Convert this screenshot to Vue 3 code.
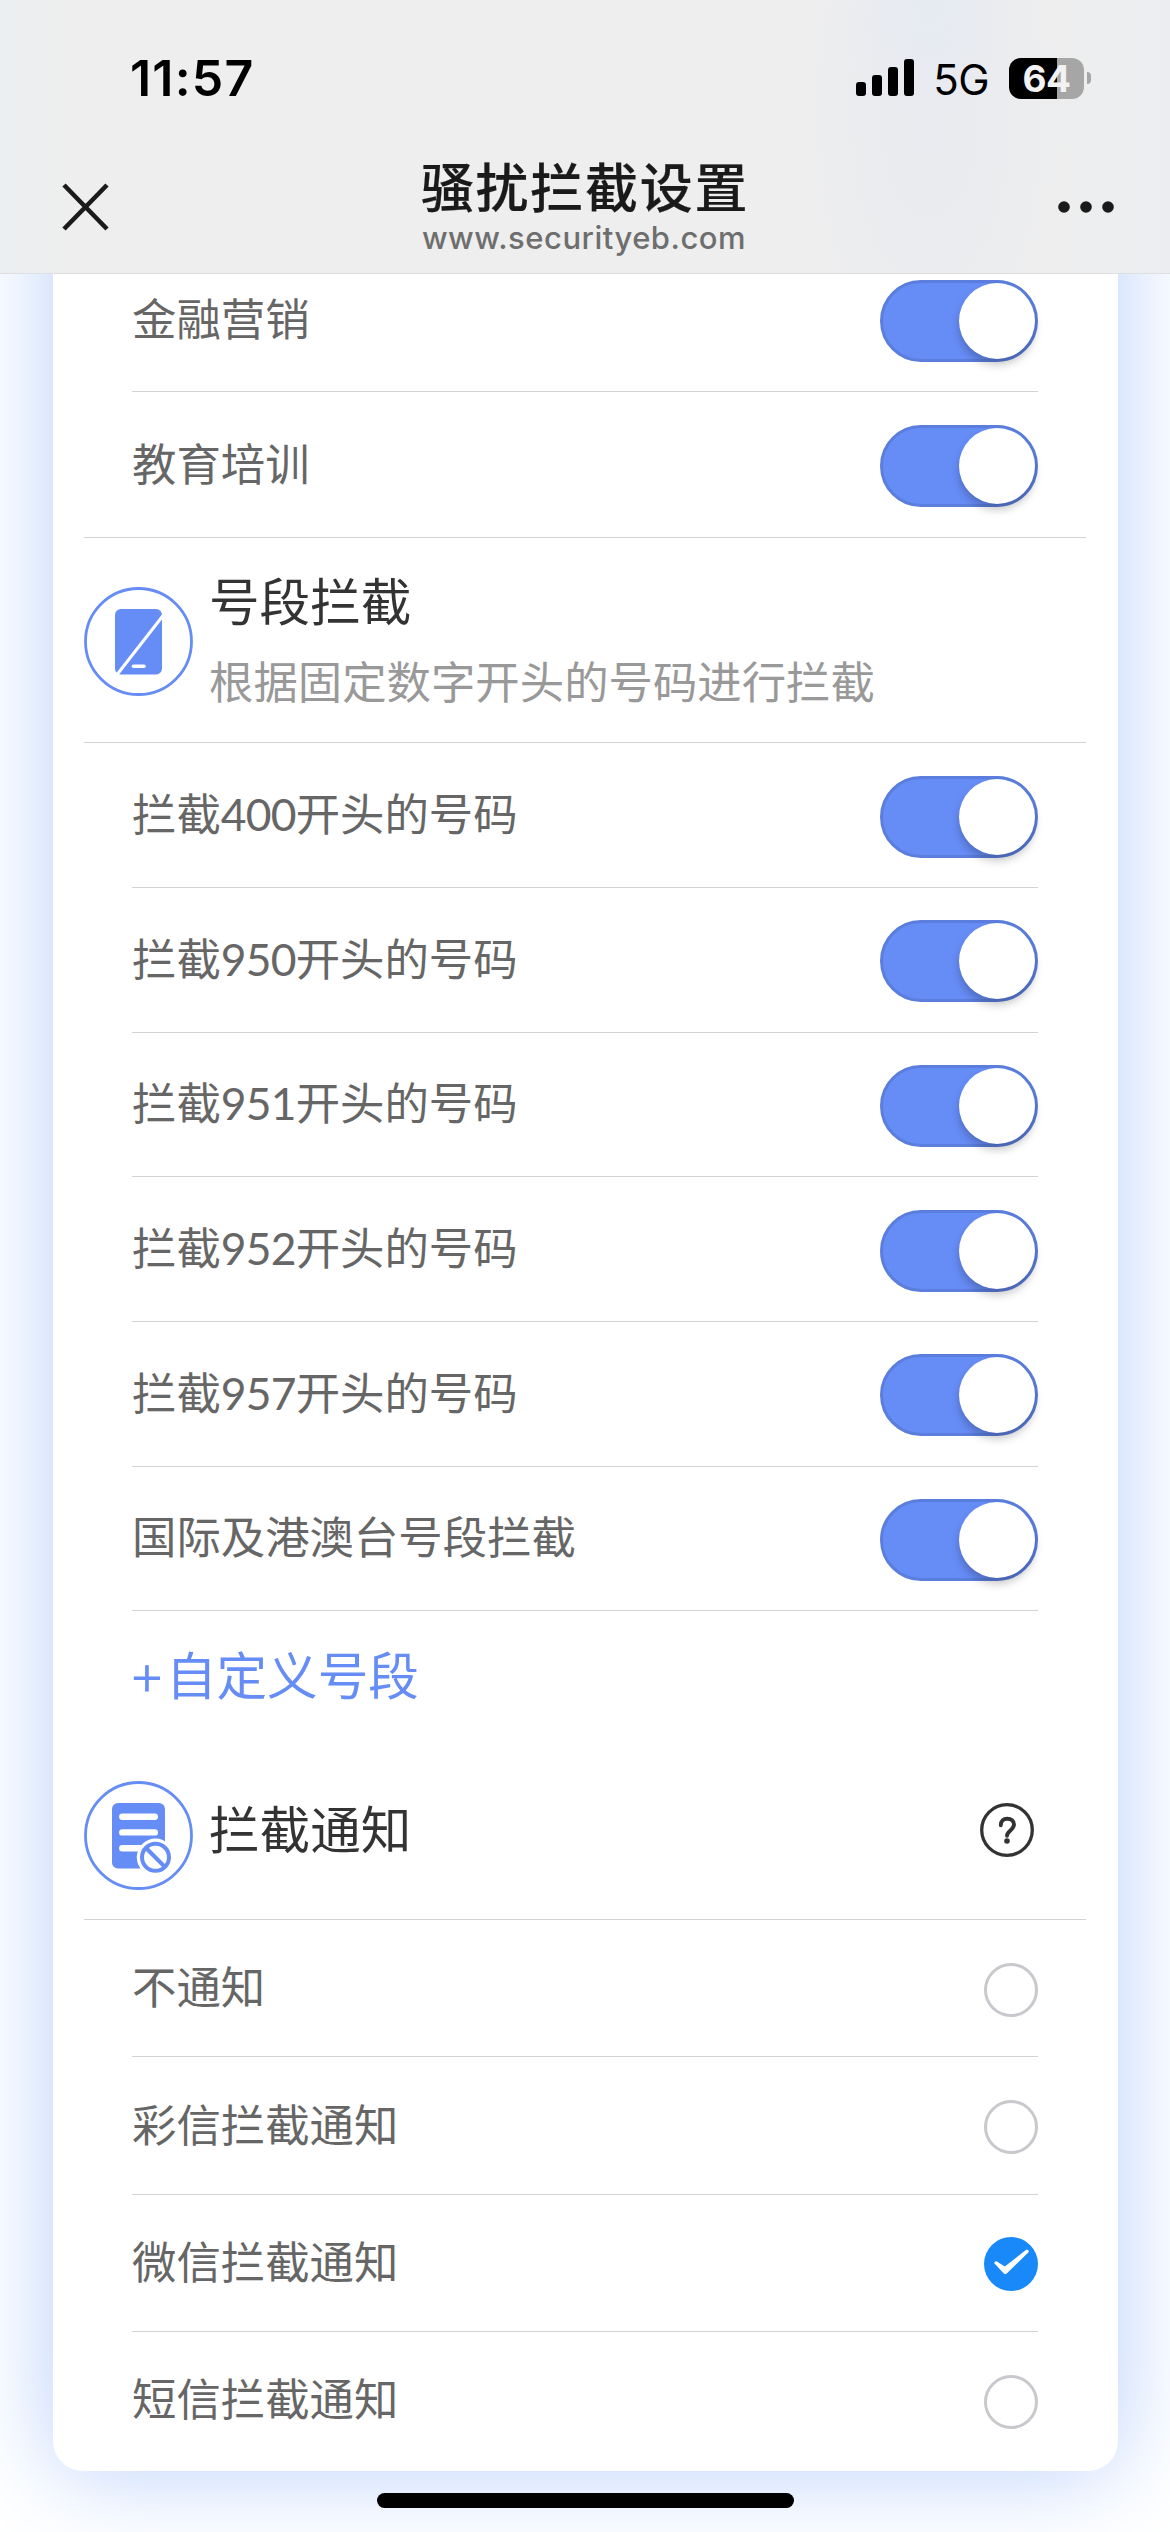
<script setup>
import { ref } from 'vue'

const categories = ref([
  { label: '金融营销', on: true },
  { label: '教育培训', on: true },
])
const segments = ref([
  { prefix: '拦截', digits: '400', suffix: '开头的号码', on: true },
  { prefix: '拦截', digits: '950', suffix: '开头的号码', on: true },
  { prefix: '拦截', digits: '951', suffix: '开头的号码', on: true },
  { prefix: '拦截', digits: '952', suffix: '开头的号码', on: true },
  { prefix: '拦截', digits: '957', suffix: '开头的号码', on: true },
  { prefix: '国际及港澳台号段拦截', digits: '', suffix: '', on: true },
])
const notices = ['不通知', '彩信拦截通知', '微信拦截通知', '短信拦截通知']
const notice = ref('微信拦截通知')
</script>

<template>
  <div class="screen">
    <header class="top">
      <div class="status">
        <span class="time">11:57</span>
        <div class="indicators">
          <svg class="signal" width="58" height="38" viewBox="0 0 58 38">
            <rect x="0" y="23" width="10" height="14" rx="3" />
            <rect x="16" y="16" width="10" height="21" rx="3" />
            <rect x="32" y="8" width="10" height="29" rx="3" />
            <rect x="48" y="0" width="10" height="37" rx="3" />
          </svg>
          <span class="network">5G</span>
          <div class="battery"><span>64</span></div>
          <i class="nub"></i>
        </div>
      </div>
      <nav class="nav">
        <svg class="close" width="47" height="48" viewBox="0 0 47 48">
          <path d="M2 2 45 46M45 2 2 46" fill="none" stroke="#1a1a1a" stroke-width="4.6" />
        </svg>
        <div class="heading">
          <h1>骚扰拦截设置</h1>
          <p>www.securityeb.com</p>
        </div>
        <svg class="more" width="56" height="12" viewBox="0 0 56 12" fill="#1a1a1a">
          <circle cx="6" cy="6" r="5.8" /><circle cx="28" cy="6" r="5.8" /><circle cx="50" cy="6" r="5.8" />
        </svg>
      </nav>
    </header>

    <main class="card">
      <ul class="rows">
        <li v-for="item in categories" :key="item.label" class="row">
          <span class="label">{{ item.label }}</span>
          <button class="toggle" :class="{ on: item.on }" @click="item.on = !item.on"><i></i></button>
        </li>
      </ul>

      <section class="section segment">
        <svg class="badge" width="109" height="109" viewBox="0 0 109 109">
          <circle cx="54.5" cy="54.5" r="53" fill="none" stroke="#668cf6" stroke-width="2.8" />
          <rect x="31" y="22" width="47" height="65.5" rx="6" fill="#668cf6" />
          <path d="M79.5 28 33.5 87" stroke="#fff" stroke-width="3" />
          <path d="M49.5 79.3H60" stroke="#fff" stroke-width="3.6" stroke-linecap="round" />
        </svg>
        <div class="titles">
          <h2>号段拦截</h2>
          <p>根据固定数字开头的号码进行拦截</p>
        </div>
      </section>

      <ul class="rows">
        <li v-for="item in segments" :key="item.prefix + item.digits" class="row">
          <span class="label">{{ item.prefix }}<span class="digits">{{ item.digits }}</span>{{ item.suffix }}</span>
          <button class="toggle" :class="{ on: item.on }" @click="item.on = !item.on"><i></i></button>
        </li>
      </ul>

      <a class="add"><span class="plus">+</span>自定义号段</a>

      <section class="section notify">
        <svg class="badge" width="109" height="109" viewBox="0 0 109 109">
          <circle cx="54.5" cy="54.5" r="53" fill="none" stroke="#668cf6" stroke-width="2.8" />
          <rect x="28" y="22" width="53" height="65.5" rx="6" fill="#668cf6" />
          <path d="M38.3 35.8H70.8M38.3 51.4H70.8M38.3 67.2H70.8" stroke="#fff" stroke-width="6.4" stroke-linecap="round" />
          <circle cx="71.5" cy="76.3" r="18.7" fill="#fff" />
          <circle cx="71.5" cy="76.3" r="13.5" fill="none" stroke="#668cf6" stroke-width="4" />
          <path d="M62 67 81 86" stroke="#668cf6" stroke-width="4" />
        </svg>
        <h2>拦截通知</h2>
        <svg class="help" width="54" height="54" viewBox="0 0 54 54">
          <circle cx="27" cy="27" r="25.3" fill="none" stroke="#333" stroke-width="3.3" />
          <path d="M20.8 22.3C20.8 18.2 23.3 15.7 27.3 15.7 31.2 15.7 34 18.1 34 21.6 34 26.8 27 28 27 32.7" fill="none" stroke="#333" stroke-width="3.9" stroke-linecap="round" />
          <circle cx="27" cy="38" r="2.8" fill="#333" />
        </svg>
      </section>

      <ul class="rows options">
        <li v-for="name in notices" :key="name" class="row" @click="notice = name">
          <span class="label">{{ name }}</span>
          <svg v-if="notice === name" class="radio" width="54" height="54" viewBox="0 0 54 54">
            <circle cx="27" cy="27" r="27" fill="#1989fa" />
            <path d="M10.3 26.2C10.5 24.5 12 23.8 13.3 24.7L20.8 29.6 41.5 13.3C43.5 12 45.5 13.5 44.5 15.2L22.7 36.6C21.8 37.6 20.7 37.6 19.8 36.6Z" fill="#fff" />
          </svg>
          <svg v-else class="radio" width="54" height="54" viewBox="0 0 54 54">
            <circle cx="27" cy="27" r="25.5" fill="none" stroke="#c8c8cd" stroke-width="3" />
          </svg>
        </li>
      </ul>
    </main>
    <div class="home"></div>
  </div>
</template>

<style>
body {
  margin: 0;
  background: #fff;
}
</style>

<style scoped>
.screen {
  position: relative;
  box-sizing: border-box;
  width: 1170px;
  height: 2532px;
  overflow: hidden;
  background: #fff;
  font-family: Lato, "Noto Sans CJK SC", sans-serif;
}
h1,
h2,
p,
ul {
  margin: 0;
  padding: 0;
  font-weight: 400;
  list-style: none;
}

.top {
  position: relative;
  z-index: 2;
  box-sizing: border-box;
  height: 274px;
  border-bottom: 1px solid #dedfe1;
  background:
    radial-gradient(ellipse 90px 120px at 930px 0, rgba(225, 232, 245, 0.5), transparent),
    radial-gradient(ellipse 150px 340px at 930px 110px, rgba(229, 232, 240, 0.6), transparent),
    linear-gradient(90deg, #ebeef0, #eee 80px, #eee 1040px, #ebedf0);
}
.status {
  display: flex;
  justify-content: space-between;
  align-items: center;
  height: 156px;
  padding: 0 79px 0 130px;
}
.time {
  font: 600 50px/60px Inter, sans-serif;
  letter-spacing: 1.2px;
  color: #000;
}
.indicators {
  display: flex;
  align-items: center;
}
.network {
  margin: 3px 20px 0 19px;
  font: 400 42px/48px Inter, sans-serif;
  letter-spacing: -0.5px;
}
.battery {
  width: 75px;
  height: 41px;
  border-radius: 12px;
  background: linear-gradient(90deg, #000 64%, #a6a6a6 64%);
  color: #f2f2f3;
  text-align: center;
  font: 700 37px/41px Inter, sans-serif;
  letter-spacing: -0.5px;
}
.nub {
  width: 4px;
  height: 12px;
  margin-left: 3px;
  border-radius: 0 5px 5px 0;
  background: #a6a6a6;
}
.nav {
  display: flex;
  justify-content: space-between;
  align-items: center;
  height: 101px;
  padding: 0 56px 0 62px;
}
.heading {
  display: flex;
  flex-direction: column;
  align-items: center;
  margin-left: 1px;
  padding-bottom: 5px;
}
.heading h1 {
  margin: 0 -2px 3px 0;
  font: 500 53px/64px "Noto Sans CJK SC", sans-serif;
  letter-spacing: 1.7px;
  color: #1a1a1a;
  -webkit-text-stroke: 0.2px #1a1a1a;
}
.heading p {
  font: 500 31px/36px Inter, sans-serif;
  letter-spacing: 0.5px;
  color: #6e6e6e;
}

.card {
  box-sizing: border-box;
  width: 1065px;
  height: 2347px;
  margin: -150px 0 0 53px;
  padding: 123.7px 32px 0 31px;
  border-radius: 30px;
  background: #fff;
  box-shadow: 0 0 100px #b7cffb;
}
.rows {
  padding: 0 48px;
}
.row {
  display: flex;
  justify-content: space-between;
  align-items: center;
  box-sizing: border-box;
  height: 144.67px;
  border-bottom: 1px solid #d2d2d4;
}
.rows:first-child .row:last-child {
  border-bottom: 0;
}
.label {
  font-size: 44.4px;
  line-height: 60px;
  color: #666;
  transform: translateY(-1px);
}
.digits {
  letter-spacing: -0.8px;
}
.toggle {
  display: flex;
  justify-content: flex-start;
  box-sizing: border-box;
  width: 158px;
  height: 82px;
  margin: 3px 0 0;
  padding: 0;
  border: 3px solid #d8d8d8;
  border-radius: 41px;
  background: #fff;
}
.toggle.on {
  justify-content: flex-end;
  border-color: #5b7edd;
  background: #668cf6;
}
.toggle i {
  width: 76px;
  height: 76px;
  border-radius: 50%;
  background: #fff;
  box-shadow: 0 6px 8px rgba(0, 0, 0, 0.22);
}
.section {
  display: flex;
  box-sizing: border-box;
  border-bottom: 1px solid #d2d2d4;
}
.section h2 {
  font-size: 50.6px;
  line-height: 70px;
  color: #333;
}
.badge {
  flex: none;
}
.segment {
  height: 206.3px;
  padding-top: 29.3px;
  border-top: 1px solid #d2d2d4;
}
.segment .badge {
  margin-top: 20px;
}
.titles {
  margin-left: 16px;
}
.titles p {
  margin-top: 15px;
  font-size: 44.4px;
  line-height: 60px;
  color: #999;
}
.add {
  display: block;
  height: 124px;
  padding-left: 44px;
  font-size: 50.6px;
  line-height: 130px;
  color: #668cf6;
}
.plus {
  font-family: Inter, sans-serif;
  font-size: 58px;
  font-weight: 300;
  line-height: 60px;
}
.notify {
  height: 185px;
  padding-top: 46px;
}
.notify h2 {
  flex: 1;
  margin: 14px 0 0 16px;
}
.help {
  margin: 22px 52px 0 0;
}
.options .row {
  height: 137.2px;
}
.options .row:last-child {
  border-bottom: 0;
}
.options .radio {
  margin-top: 3px;
}
.home {
  position: absolute;
  left: 377px;
  bottom: 24px;
  width: 417px;
  height: 15px;
  border-radius: 8px;
  background: #000;
}
</style>
